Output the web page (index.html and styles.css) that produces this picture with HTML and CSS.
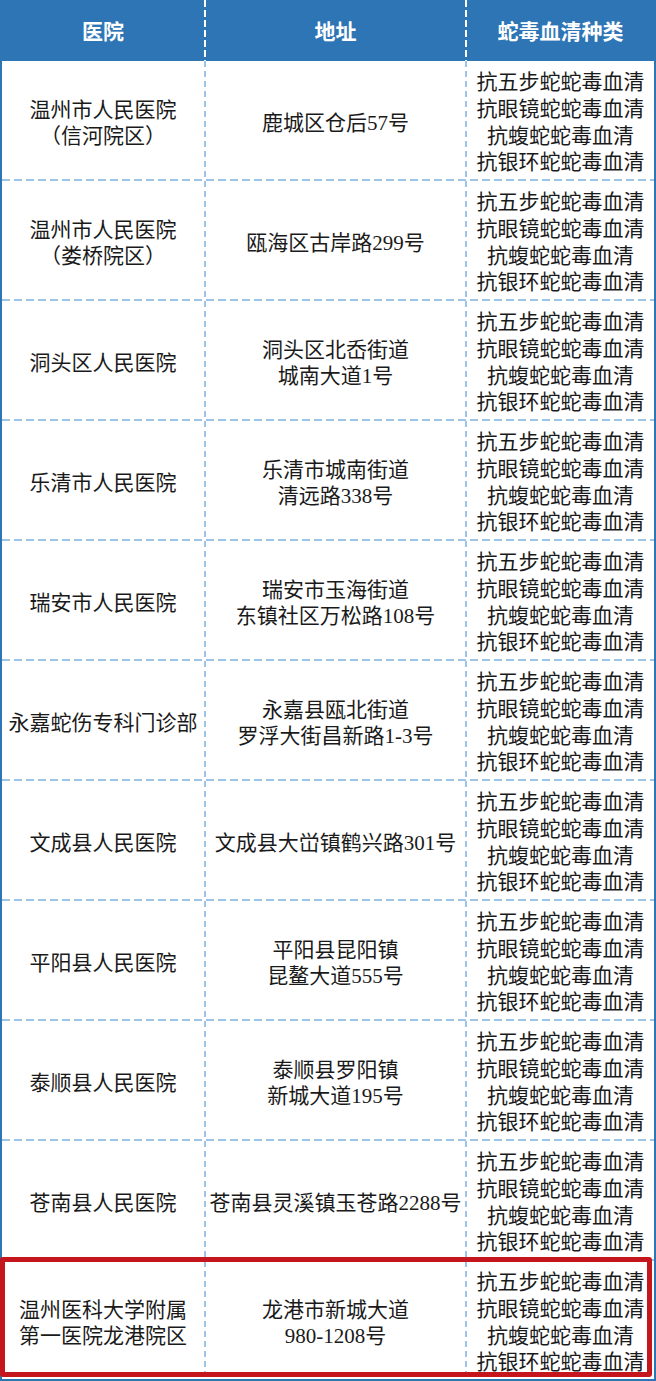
FILE: index.html
```html
<!DOCTYPE html>
<html lang="zh-CN">
<head>
<meta charset="utf-8">
<title>蛇毒血清医院</title>
<link rel="stylesheet" href="styles.css">
</head>
<body>
<div class="table">
  <div class="row head">
    <div class="cell">医院</div>
    <div class="cell">地址</div>
    <div class="cell">蛇毒血清种类</div>
  </div>
  <div class="row first">
    <div class="cell">温州市人民医院<br>（信河院区）</div>
    <div class="cell">鹿城区仓后57号</div>
    <div class="cell serum">抗五步蛇蛇毒血清<br>抗眼镜蛇蛇毒血清<br>抗蝮蛇蛇毒血清<br>抗银环蛇蛇毒血清</div>
  </div>
  <div class="row">
    <div class="cell">温州市人民医院<br>（娄桥院区）</div>
    <div class="cell">瓯海区古岸路299号</div>
    <div class="cell serum">抗五步蛇蛇毒血清<br>抗眼镜蛇蛇毒血清<br>抗蝮蛇蛇毒血清<br>抗银环蛇蛇毒血清</div>
  </div>
  <div class="row">
    <div class="cell">洞头区人民医院</div>
    <div class="cell">洞头区北岙街道<br>城南大道1号</div>
    <div class="cell serum">抗五步蛇蛇毒血清<br>抗眼镜蛇蛇毒血清<br>抗蝮蛇蛇毒血清<br>抗银环蛇蛇毒血清</div>
  </div>
  <div class="row">
    <div class="cell">乐清市人民医院</div>
    <div class="cell">乐清市城南街道<br>清远路338号</div>
    <div class="cell serum">抗五步蛇蛇毒血清<br>抗眼镜蛇蛇毒血清<br>抗蝮蛇蛇毒血清<br>抗银环蛇蛇毒血清</div>
  </div>
  <div class="row">
    <div class="cell">瑞安市人民医院</div>
    <div class="cell">瑞安市玉海街道<br>东镇社区万松路108号</div>
    <div class="cell serum">抗五步蛇蛇毒血清<br>抗眼镜蛇蛇毒血清<br>抗蝮蛇蛇毒血清<br>抗银环蛇蛇毒血清</div>
  </div>
  <div class="row">
    <div class="cell">永嘉蛇伤专科门诊部</div>
    <div class="cell">永嘉县瓯北街道<br>罗浮大街昌新路1-3号</div>
    <div class="cell serum">抗五步蛇蛇毒血清<br>抗眼镜蛇蛇毒血清<br>抗蝮蛇蛇毒血清<br>抗银环蛇蛇毒血清</div>
  </div>
  <div class="row">
    <div class="cell">文成县人民医院</div>
    <div class="cell">文成县大峃镇鹤兴路301号</div>
    <div class="cell serum">抗五步蛇蛇毒血清<br>抗眼镜蛇蛇毒血清<br>抗蝮蛇蛇毒血清<br>抗银环蛇蛇毒血清</div>
  </div>
  <div class="row">
    <div class="cell">平阳县人民医院</div>
    <div class="cell">平阳县昆阳镇<br>昆鳌大道555号</div>
    <div class="cell serum">抗五步蛇蛇毒血清<br>抗眼镜蛇蛇毒血清<br>抗蝮蛇蛇毒血清<br>抗银环蛇蛇毒血清</div>
  </div>
  <div class="row">
    <div class="cell">泰顺县人民医院</div>
    <div class="cell">泰顺县罗阳镇<br>新城大道195号</div>
    <div class="cell serum">抗五步蛇蛇毒血清<br>抗眼镜蛇蛇毒血清<br>抗蝮蛇蛇毒血清<br>抗银环蛇蛇毒血清</div>
  </div>
  <div class="row">
    <div class="cell">苍南县人民医院</div>
    <div class="cell">苍南县灵溪镇玉苍路2288号</div>
    <div class="cell serum">抗五步蛇蛇毒血清<br>抗眼镜蛇蛇毒血清<br>抗蝮蛇蛇毒血清<br>抗银环蛇蛇毒血清</div>
  </div>
  <div class="row highlight">
    <div class="cell">温州医科大学附属<br>第一医院龙港院区</div>
    <div class="cell">龙港市新城大道<br>980-1208号</div>
    <div class="cell serum">抗五步蛇蛇毒血清<br>抗眼镜蛇蛇毒血清<br>抗蝮蛇蛇毒血清<br>抗银环蛇蛇毒血清</div>
  </div>
</div>
</body>
</html>
```
FILE: styles.css
```css
* { box-sizing: border-box; }
body {
  margin: 0;
  background: #ffffff;
}
.table {
  width: 656px;
  border: 2px solid #2E75B6;
  border-top: 0;
  font-family: "Liberation Serif", "Noto Sans CJK SC", serif;
  font-size: 21px;
  color: #1a1a1a;
}
.row {
  display: grid;
  grid-template-columns: 202px 261px 189px;
  height: 120px;
  padding-top: 2px;
  background-image: repeating-linear-gradient(90deg, #9DC3E6 0 8px, transparent 8px 12px);
  background-size: 100% 2px;
  background-position: left top;
  background-repeat: no-repeat;
}
.row.first {
  height: 118px;
  padding-top: 0;
  background-image: none;
}
.row.head {
  height: 61px;
  padding-top: 0;
  background-image: none;
  background-color: #2E75B6;
  color: #ffffff;
  font-weight: bold;
}
.cell {
  display: flex;
  align-items: center;
  justify-content: center;
  text-align: center;
  line-height: 26px;
  white-space: nowrap;
  padding-top: 5px;
}
.head .cell {
  padding-top: 2px;
}
.cell + .cell {
  padding-left: 2px;
  background-image: repeating-linear-gradient(180deg, #9DC3E6 0 6px, transparent 6px 10px);
  background-size: 2px 100%;
  background-position: left top;
  background-repeat: no-repeat;
}
.head .cell + .cell {
  background-image: repeating-linear-gradient(180deg, #ffffff 0 7px, transparent 7px 10px);
}
.cell.serum {
  line-height: 26.7px;
}
.row.highlight {
  position: relative;
}
.row.highlight::after {
  content: "";
  position: absolute;
  top: -2px;
  left: -2px;
  right: 2px;
  bottom: 2px;
  border: 5px solid #C4161C;
  border-radius: 3px;
  pointer-events: none;
}
```
